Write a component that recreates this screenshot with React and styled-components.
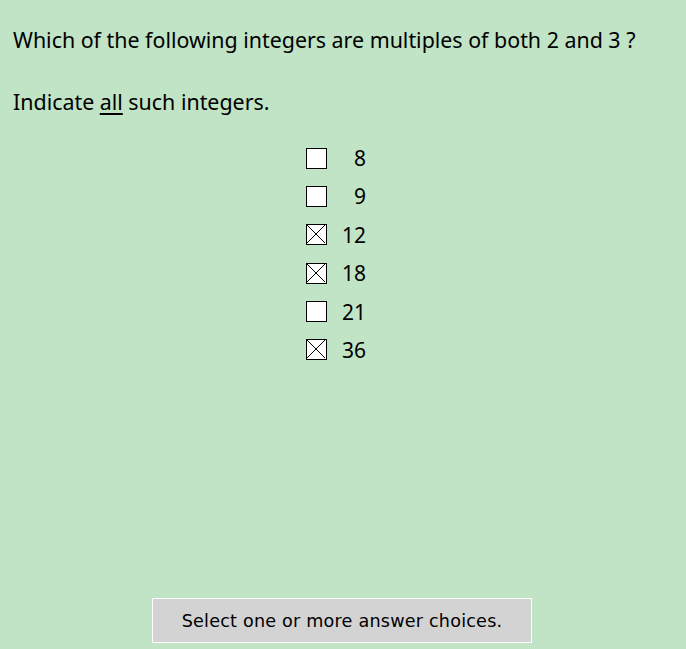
import React from 'react'
import { styled, createGlobalStyle } from 'styled-components'

const CHOICES = [
    { id: 1, value: '8', checked: false },
    { id: 2, value: '9', checked: false },
    { id: 3, value: '12', checked: true },
    { id: 4, value: '18', checked: true },
    { id: 5, value: '21', checked: false },
    { id: 6, value: '36', checked: true },
]

const GlobalStyle = createGlobalStyle`
    html, body {
        margin: 0;
        padding: 0;
        background: #c0e4c5;
    }
`

const Page = styled.div`
    width: 686px;
    height: 649px;
    box-sizing: border-box;
    padding: 26px 13px 6px;
    display: flex;
    flex-direction: column;
    font-family: "Noto Sans", "Lato", sans-serif;
    color: #000;
`

const Question = styled.p`
    margin: 0;
    font-size: 21.4px;
    line-height: 28px;
`

const Instruction = styled.p`
    margin: 34px 0 0;
    font-size: 21.4px;
    line-height: 28px;

    u {
        text-decoration-thickness: 2px;
        text-underline-offset: 3px;
    }
`

const ChoiceList = styled.div`
    margin-top: 32px;
    padding-left: 293px;
    display: flex;
    flex-direction: column;
    align-items: flex-start;
    gap: 18.4px;
`

const Choice = styled.label`
    display: flex;
    align-items: center;
    gap: 9px;
    height: 20px;
    cursor: pointer;
`

const Box = styled.span`
    width: 21px;
    height: 21px;
    box-sizing: border-box;
    border: 1.4px solid #000;
    background: #fff;
    display: flex;
`

const Value = styled.span`
    width: 30px;
    text-align: right;
    font-size: 21px;
`

const Spacer = styled.div`
    flex: 1;
`

const StatusBar = styled.div`
    align-self: flex-start;
    margin-left: 139px;
    width: 380px;
    height: 45px;
    box-sizing: border-box;
    border: 1px solid #fff;
    background: #d3d3d3;
    display: flex;
    align-items: center;
    justify-content: center;
    font-family: "DejaVu Sans", Verdana, sans-serif;
    font-size: 17.6px;
    letter-spacing: 0.2px;
    color: #000;
`

function Cross() {
    return (
        <svg width="18" height="18" viewBox="0 0 18 18">
            <path d="M0 0 L18 18 M18 0 L0 18" stroke="#000" strokeWidth="1" />
        </svg>
    )
}

function App() {
    return (
        <>
            <GlobalStyle />
            <Page>
                <Question>Which of the following integers are multiples of both 2 and 3 ?</Question>
                <Instruction>Indicate <u>all</u> such integers.</Instruction>
                <ChoiceList>
                    {CHOICES.map(c => (
                        <Choice key={c.id}>
                            <Box>{c.checked && <Cross />}</Box>
                            <Value>{c.value}</Value>
                        </Choice>
                    ))}
                </ChoiceList>
                <Spacer />
                <StatusBar>Select one or more answer choices.</StatusBar>
            </Page>
        </>
    )
}

export default App
